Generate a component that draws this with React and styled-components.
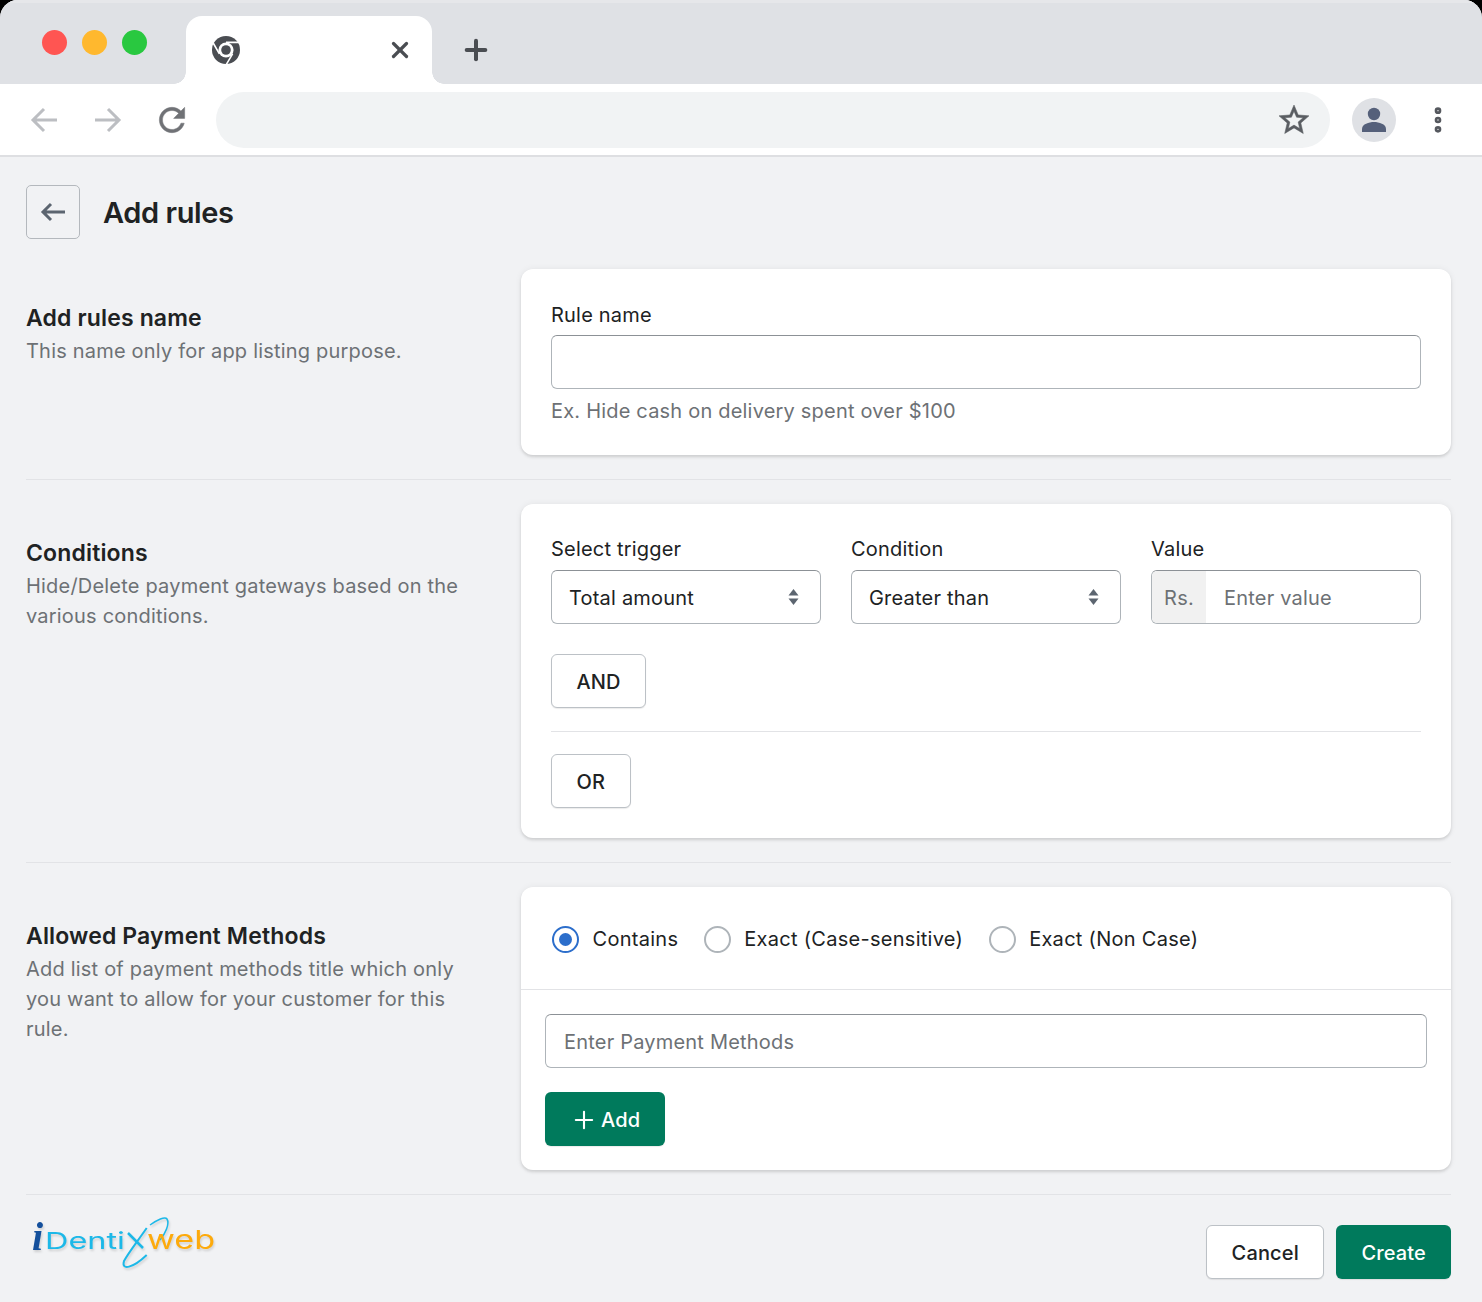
import React from 'react';
import styled, { createGlobalStyle } from 'styled-components';
import { X, Plus, EllipsisVertical } from 'lucide-react';

const GlobalStyle = createGlobalStyle`
  html, body {
    margin: 0;
    padding: 0;
    background: #000;
  }
  * {
    box-sizing: border-box;
  }
  body {
    font-family: Inter, "Liberation Sans", sans-serif;
    font-size: 20px;
    letter-spacing: 0.2px;
    color: #202223;
  }
`;

const Frame = styled.div`
  width: 1482px;
  height: 1302px;
  background: #f1f2f4;
  border-radius: 18px 18px 0 0;
  overflow: hidden;
`;

const TitleBar = styled.div`
  height: 84px;
  background: #dfe1e5;
  border-top: 3px solid #e6e7ea;
  display: flex;
  align-items: flex-start;
`;

const Lights = styled.div`
  display: flex;
  gap: 15px;
  padding: 27px 0 0 41.5px;
  width: 186px;
`;

const Light = styled.span`
  width: 25px;
  height: 25px;
  border-radius: 50%;
  background: ${props => props.color};
`;

const Tab = styled.div`
  position: relative;
  width: 246px;
  height: 68px;
  margin-top: 13px;
  background: #fff;
  border-radius: 16px 16px 0 0;
  display: flex;
  align-items: center;
  justify-content: space-between;
  padding: 0 19px 0 25px;
  color: #4a4d52;

  &::before,
  &::after {
    content: '';
    position: absolute;
    bottom: 0;
    width: 12px;
    height: 12px;
  }
  &::before {
    left: -12px;
    background: radial-gradient(circle at 0 0, #dfe1e5 11.5px, #fff 12px);
  }
  &::after {
    right: -12px;
    background: radial-gradient(circle at 100% 0, #dfe1e5 11.5px, #fff 12px);
  }
`;

const NewTab = styled.div`
  margin: 31px 0 0 28px;
  color: #4a4d52;
  display: flex;
`;

const Toolbar = styled.div`
  height: 73px;
  background: #fff;
  border-bottom: 2px solid #dedfe2;
  display: flex;
  align-items: center;
  padding: 1px 0 0 12px;
`;

const NavIcons = styled.div`
  display: grid;
  grid-template-columns: repeat(3, 64px);
  justify-items: center;
  align-items: center;
  width: 204px;
`;

const AddressBar = styled.div`
  width: 1114px;
  height: 56px;
  border-radius: 28px;
  background: #f1f3f4;
  display: flex;
  align-items: center;
  justify-content: flex-end;
  padding-right: 18px;
`;

const Avatar = styled.div`
  width: 44px;
  height: 44px;
  margin-left: 22px;
  border-radius: 50%;
  background: #dfe1e5;
  display: flex;
  align-items: center;
  justify-content: center;
`;

const MenuDots = styled.div`
  margin-left: 26px;
  color: #55585e;
  display: flex;
`;

const Page = styled.main`
  padding: 28px 31px 0 26px;
`;

const PageHeader = styled.header`
  display: flex;
  align-items: center;
  gap: 23px;
  margin-bottom: 30px;
`;

const BackButton = styled.button`
  width: 54px;
  height: 54px;
  padding: 0;
  background: transparent;
  border: 1.5px solid #b4b8bd;
  border-radius: 5px;
  display: flex;
  align-items: center;
  justify-content: center;
`;

const PageTitle = styled.h1`
  margin: 0;
  padding-top: 2px;
  font-size: 29px;
  line-height: 40px;
  font-weight: 600;
  letter-spacing: -0.4px;
  color: #202223;
`;

const Section = styled.section`
  display: grid;
  grid-template-columns: 495px 930px;
  padding-bottom: 24px;
  margin-bottom: 24px;
  border-bottom: 1.5px solid #e2e3e6;
`;

const SectionInfo = styled.div`
  padding-top: 34px;
`;

const SectionTitle = styled.h2`
  margin: 0;
  font-size: 23px;
  line-height: 30px;
  font-weight: 600;
  letter-spacing: 0.15px;
  color: #202223;
`;

const SectionText = styled.p`
  margin: 3px 0 0;
  width: 440px;
  font-size: 20px;
  line-height: 30px;
  color: #6d7175;
`;

const Card = styled.div`
  background: #fff;
  border-radius: 12px;
  box-shadow: 0 0 7px rgba(23, 24, 24, 0.06), 0 2px 3px rgba(0, 0, 0, 0.12);
  padding: ${props => props.$padding || '30px'};
`;

const Label = styled.label`
  display: block;
  font-size: 20px;
  line-height: 30px;
  margin-bottom: 6px;
  color: #202223;
`;

const RuleLabel = styled(Label)`
  padding-top: 1px;
  margin-bottom: 5px;
`;

const Box = styled.div`
  height: 54px;
  border: 1.5px solid #aeb4b9;
  border-top-color: #8c9196;
  border-radius: 6px;
  background: #fff;
  display: flex;
  align-items: center;
  overflow: hidden;
`;

const Help = styled.div`
  margin-top: 9px;
  font-size: 20px;
  line-height: 27px;
  color: #6d7175;
`;

const FieldRow = styled.div`
  display: grid;
  grid-template-columns: repeat(3, 270px);
  gap: 30px;
`;

const SelectBox = styled(Box)`
  justify-content: space-between;
  padding: 2px 21px 0 17px;
  color: #202223;
`;

const Carets = styled.svg`
  width: 11px;
  height: 18px;
  margin-top: -2px;
  fill: #5c6570;
`;

const Prefix = styled.span`
  width: 54px;
  height: 100%;
  padding-top: 2px;
  background: #f1f1f1;
  color: #6d7175;
  display: flex;
  align-items: center;
  justify-content: center;
`;

const Placeholder = styled.span`
  padding: 2px 0 0 18px;
  color: #6d7175;
`;

const Button = styled.button`
  height: 54px;
  padding: 2px ${props => (props.$primary ? 25 : 24.5)}px 0;
  font-family: inherit;
  font-size: 20px;
  font-weight: 500;
  letter-spacing: 0.15px;
  color: ${props => (props.$primary ? '#fff' : '#202223')};
  background: ${props => (props.$primary ? '#007a5c' : '#fff')};
  border: ${props => (props.$primary ? 'none' : '1.5px solid #bcc1c6')};
  border-radius: 6px;
  box-shadow: 0 1px 1px rgba(0, 0, 0, 0.08);
  display: inline-flex;
  align-items: center;
  justify-content: center;
  gap: 3px;
`;

const AndWrap = styled.div`
  margin-top: 30px;
  padding-bottom: 23px;
  border-bottom: 1.5px solid #e2e3e6;
`;

const OrWrap = styled.div`
  margin-top: 22px;
`;

const RadioRow = styled.div`
  display: flex;
  align-items: center;
  gap: 25.5px;
  height: 103px;
  padding: 2px 0 0 31px;
  border-bottom: 1.5px solid #e2e3e6;
`;

const RadioOption = styled.label`
  display: flex;
  align-items: center;
  gap: 13.5px;
  letter-spacing: 0.28px;
  color: #202223;
`;

const RadioCircle = styled.span`
  width: 27px;
  height: 27px;
  border-radius: 50%;
  border: 2.5px solid ${props => (props.$checked ? '#2c6ecb' : '#aeb4b9')};
  display: flex;
  align-items: center;
  justify-content: center;

  &::after {
    content: '';
    width: 13px;
    height: 13px;
    border-radius: 50%;
    background: ${props => (props.$checked ? '#2c6ecb' : 'transparent')};
  }
`;

const MethodsBlock = styled.div`
  padding: 24px;
  display: flex;
  flex-direction: column;
  align-items: flex-start;
  gap: 24px;
`;

const WideBox = styled(Box)`
  width: 100%;
`;

const Footer = styled.footer`
  display: flex;
  justify-content: space-between;
  align-items: flex-start;
  margin-top: 30px;
  padding-left: 3px;
`;

const FooterActions = styled.div`
  display: flex;
  gap: 12px;
`;

const LogoMark = styled.svg`
  width: 190px;
  height: 58px;
  margin-top: -11px;
  filter: drop-shadow(1px 2px 1px rgba(0, 0, 0, 0.14));
`;

const ChromeIcon = () => (
  <svg width="30" height="30" viewBox="0 0 30 30">
    <circle cx="15" cy="15" r="14" fill="#4a4d52" />
    <circle cx="15" cy="15" r="7.6" fill="#fff" />
    <circle cx="15" cy="15" r="4.8" fill="#4a4d52" />
    <path d="M15 7.4h12.6M8.4 18.8 2.2 8M21.6 18.8 15.2 29.6" stroke="#fff" strokeWidth="1.6" fill="none" />
  </svg>
);

const PersonIcon = () => (
  <svg width="26" height="28" viewBox="0 0 26 28">
    <circle cx="13" cy="8" r="6.2" fill="#55607a" />
    <path d="M1 26v-3c0-5 7-7 12-7s12 2 12 7v3z" fill="#55607a" />
  </svg>
);

const ToolbarArrow = ({ flip }) => (
  <svg width="28" height="26" viewBox="0 0 28 26" fill="none" stroke="#bcbec2" strokeWidth="3" style={flip ? { transform: 'scaleX(-1)' } : undefined}>
    <path d="M27 13H3M14 2 3 13l11 11" />
  </svg>
);

const ReloadIcon = () => (
  <svg width="38" height="38" viewBox="0 0 24 24" fill="#707276" stroke="#707276" strokeWidth="0.3">
    <path d="M17.65 6.35C16.2 4.9 14.21 4 12 4c-4.42 0-7.99 3.58-7.99 8s3.57 8 7.99 8c3.73 0 6.84-2.55 7.73-6h-2.08c-.82 2.33-3.04 4-5.65 4-3.31 0-6-2.69-6-6s2.69-6 6-6c1.66 0 3.14.69 4.22 1.78L13 11h7V4l-2.35 2.35z" />
  </svg>
);

const StarIcon = () => (
  <svg width="36" height="36" viewBox="0 0 24 24" fill="#5a5d62" stroke="#5a5d62" strokeWidth="0.35">
    <path d="M22 9.24l-7.19-.62L12 2 9.19 8.63 2 9.24l5.46 4.73L5.82 21 12 17.27 18.18 21l-1.63-7.03L22 9.24zM12 15.4l-3.76 2.27 1-4.28-3.32-2.88 4.38-.38L12 6.1l1.71 4.04 4.38.38-3.32 2.88 1 4.28L12 15.4z" />
  </svg>
);

const BackArrow = () => (
  <svg width="26" height="20" viewBox="0 0 26 20" fill="none" stroke="#5c6570" strokeWidth="3">
    <path d="M25 10H3M11 2 3 10l8 8" />
  </svg>
);

const SelectField = ({ label, value }) => (
  <div>
    <Label>{label}</Label>
    <SelectBox>
      {value}
      <Carets viewBox="0 0 11 18">
        <path d="M5.5 1 10.5 7.5H.5z" />
        <path d="M5.5 17 10.5 10.5H.5z" />
      </Carets>
    </SelectBox>
  </div>
);

const Radio = ({ label, checked }) => (
  <RadioOption>
    <RadioCircle $checked={checked} />
    {label}
  </RadioOption>
);

const Logo = () => (
  <LogoMark viewBox="0 0 190 58">
    <text x="3" y="36" fontFamily="Liberation Serif, serif" fontStyle="italic" fontWeight="700" fontSize="40" fill="#14509c">i</text>
    <text x="16" y="35" fontFamily="Inter, sans-serif" fontWeight="400" fontSize="23" letterSpacing="0" fill="#1cb8e8" textLength="80" lengthAdjust="spacingAndGlyphs">Denti</text>
    <path d="M99 19 114 34" stroke="#1cb8e8" strokeWidth="2.5" fill="none" />
    <path d="M117.7 14 C108 28 100 38 95 47 C92 57 104 54 117.7 41" stroke="#1cb8e8" strokeWidth="2" fill="none" />
    <path d="M121 11 C128 6 136 2 138 5 C141 10 136 20 131 26" stroke="#1cb8e8" strokeWidth="1.5" fill="none" />
    <text x="118" y="35" fontFamily="Inter, sans-serif" fontWeight="400" fontSize="26" letterSpacing="0" fill="#fdaa0c" textLength="68" lengthAdjust="spacingAndGlyphs">web</text>
  </LogoMark>
);

export default function App() {
  return (
    <Frame>
      <GlobalStyle />
      <TitleBar>
        <Lights>
          <Light color="#ff5552" />
          <Light color="#ffb82e" />
          <Light color="#29c840" />
        </Lights>
        <Tab>
          <ChromeIcon />
          <X size={26} strokeWidth={3} />
        </Tab>
        <NewTab>
          <Plus size={32} strokeWidth={3} />
        </NewTab>
      </TitleBar>
      <Toolbar>
        <NavIcons>
          <ToolbarArrow />
          <ToolbarArrow flip />
          <ReloadIcon />
        </NavIcons>
        <AddressBar>
          <StarIcon />
        </AddressBar>
        <Avatar>
          <PersonIcon />
        </Avatar>
        <MenuDots>
          <EllipsisVertical size={32} strokeWidth={3} />
        </MenuDots>
      </Toolbar>
      <Page>
        <PageHeader>
          <BackButton>
            <BackArrow />
          </BackButton>
          <PageTitle>Add rules</PageTitle>
        </PageHeader>

        <Section>
          <SectionInfo>
            <SectionTitle>Add rules name</SectionTitle>
            <SectionText>This name only for app listing purpose.</SectionText>
          </SectionInfo>
          <Card>
            <RuleLabel>Rule name</RuleLabel>
            <Box />
            <Help>Ex. Hide cash on delivery spent over $100</Help>
          </Card>
        </Section>

        <Section>
          <SectionInfo>
            <SectionTitle>Conditions</SectionTitle>
            <SectionText>Hide/Delete payment gateways based on the various conditions.</SectionText>
          </SectionInfo>
          <Card>
            <FieldRow>
              <SelectField label="Select trigger" value="Total amount" />
              <SelectField label="Condition" value="Greater than" />
              <div>
                <Label>Value</Label>
                <Box>
                  <Prefix>Rs.</Prefix>
                  <Placeholder>Enter value</Placeholder>
                </Box>
              </div>
            </FieldRow>
            <AndWrap>
              <Button>AND</Button>
            </AndWrap>
            <OrWrap>
              <Button>OR</Button>
            </OrWrap>
          </Card>
        </Section>

        <Section>
          <SectionInfo>
            <SectionTitle>Allowed Payment Methods</SectionTitle>
            <SectionText>Add list of payment methods title which only you want to allow for your customer for this rule.</SectionText>
          </SectionInfo>
          <Card $padding="0">
            <RadioRow>
              <Radio label="Contains" checked />
              <Radio label="Exact (Case-sensitive)" />
              <Radio label="Exact (Non Case)" />
            </RadioRow>
            <MethodsBlock>
              <WideBox>
                <Placeholder>Enter Payment Methods</Placeholder>
              </WideBox>
              <Button $primary>
                <Plus size={28} strokeWidth={1.8} />
                Add
              </Button>
            </MethodsBlock>
          </Card>
        </Section>

        <Footer>
          <Logo />
          <FooterActions>
            <Button>Cancel</Button>
            <Button $primary>Create</Button>
          </FooterActions>
        </Footer>
      </Page>
    </Frame>
  );
}
